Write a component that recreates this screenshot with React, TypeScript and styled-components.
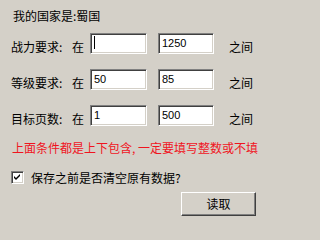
import React from "react";
import styled, { createGlobalStyle } from "styled-components";

const Global = createGlobalStyle`
  html, body { margin: 0; padding: 0; background: #d4d0c8; }
  body { font-family: "Noto Sans CJK SC", "Liberation Sans", sans-serif; font-size: 12px; color: #000; }
`;

const Panel = styled.div`
  width: 276px;
  height: 219px;
  box-sizing: border-box;
  padding: 9px 20px 0 11px;
  background: #d4d0c8;
  display: flex;
  flex-direction: column;
`;

const Title = styled.div`
  line-height: 14px;
  height: 14px;
  padding-left: 2px;
`;

const Rows = styled.div`
  margin-top: 10px;
  display: flex;
  flex-direction: column;
  gap: 15px;
`;

const Row = styled.div`
  display: grid;
  grid-template-columns: 61px 18px 57px 67px auto;
  align-items: center;
  height: 21px;
`;

const Label = styled.span`
  line-height: 14px;
  margin-top: 6px;
  white-space: nowrap;
`;

const Field = styled.div<{ $ml?: number }>`
  box-sizing: border-box;
  height: 21px;
  width: ${(p) => (p.$ml ? 56 : 57)}px;
  margin-left: ${(p) => p.$ml ?? 0}px;
  background: #fff;
  border-top: 1px solid #808080;
  border-left: 1px solid #808080;
  border-right: 1px solid #fff;
  border-bottom: 1px solid #fff;
  box-shadow: inset 1px 1px 0 #404040, inset -1px -1px 0 #d4d0c8;
  padding: 0 0 0 3px;
  font-family: "Liberation Sans", sans-serif;
  font-size: 11px;
  line-height: 19px;
`;

const Caret = styled.span`
  display: inline-block;
  width: 1px;
  height: 13px;
  margin-top: 2px;
  background: #000;
  vertical-align: top;
`;

const Between = styled.span`
  margin-left: 15px;
  margin-top: 6px;
  line-height: 14px;
  white-space: nowrap;
`;

const Warning = styled.div`
  margin-top: 15px;
  color: #f0141e;
  line-height: 14px;
  padding-left: 1px;
  white-space: nowrap;
`;

const Comma = styled.span`
  display: inline-block;
  width: 6px;
`;

const CheckRow = styled.label`
  margin-top: 16px;
  display: flex;
  align-items: center;
  gap: 7px;
  height: 13px;
`;

const Box = styled.span`
  box-sizing: border-box;
  width: 13px;
  height: 13px;
  background: #fff;
  border-top: 1px solid #808080;
  border-left: 1px solid #808080;
  border-right: 1px solid #fff;
  border-bottom: 1px solid #fff;
  box-shadow: inset 1px 1px 0 #404040, inset -1px -1px 0 #d4d0c8;
  display: flex;
  align-items: center;
  justify-content: center;
`;

const Footer = styled.div`
  margin-top: 8px;
  display: flex;
  justify-content: flex-end;
`;

const Button = styled.button`
  box-sizing: border-box;
  width: 75px;
  height: 24px;
  background: #d4d0c8;
  border-top: 1px solid #fff;
  border-left: 1px solid #fff;
  border-right: 1px solid #404040;
  border-bottom: 1px solid #404040;
  box-shadow: inset -1px -1px 0 #808080;
  font-family: "Noto Sans CJK SC", sans-serif;
  font-size: 12px;
  color: #000;
  padding: 0;
  line-height: 14px;
`;

const rows = [
  { label: "战力要求:", a: "", b: "1250", caret: true },
  { label: "等级要求:", a: "50", b: "85" },
  { label: "目标页数:", a: "1", b: "500" },
];

export default function App() {
  return (
    <>
      <Global />
      <Panel>
        <Title>我的国家是:蜀国</Title>
        <Rows>
          {rows.map((r) => (
            <Row key={r.label}>
              <Label>{r.label}</Label>
              <Label>在</Label>
              <Field>{r.caret ? <Caret /> : r.a}</Field>
              <Field $ml={11}>{r.b}</Field>
              <Between>之间</Between>
            </Row>
          ))}
        </Rows>
        <Warning>
          上面条件都是上下包含<Comma>,</Comma>一定要填写整数或不填
        </Warning>
        <CheckRow>
          <Box>
            <svg width="7" height="7" viewBox="0 0 7 7">
              <path d="M0 2 L2 4 L6 0 L6 2 L2 6 L0 4 Z" fill="#000" />
            </svg>
          </Box>
          <span>保存之前是否清空原有数据?</span>
        </CheckRow>
        <Footer>
          <Button>读取</Button>
        </Footer>
      </Panel>
    </>
  );
}
